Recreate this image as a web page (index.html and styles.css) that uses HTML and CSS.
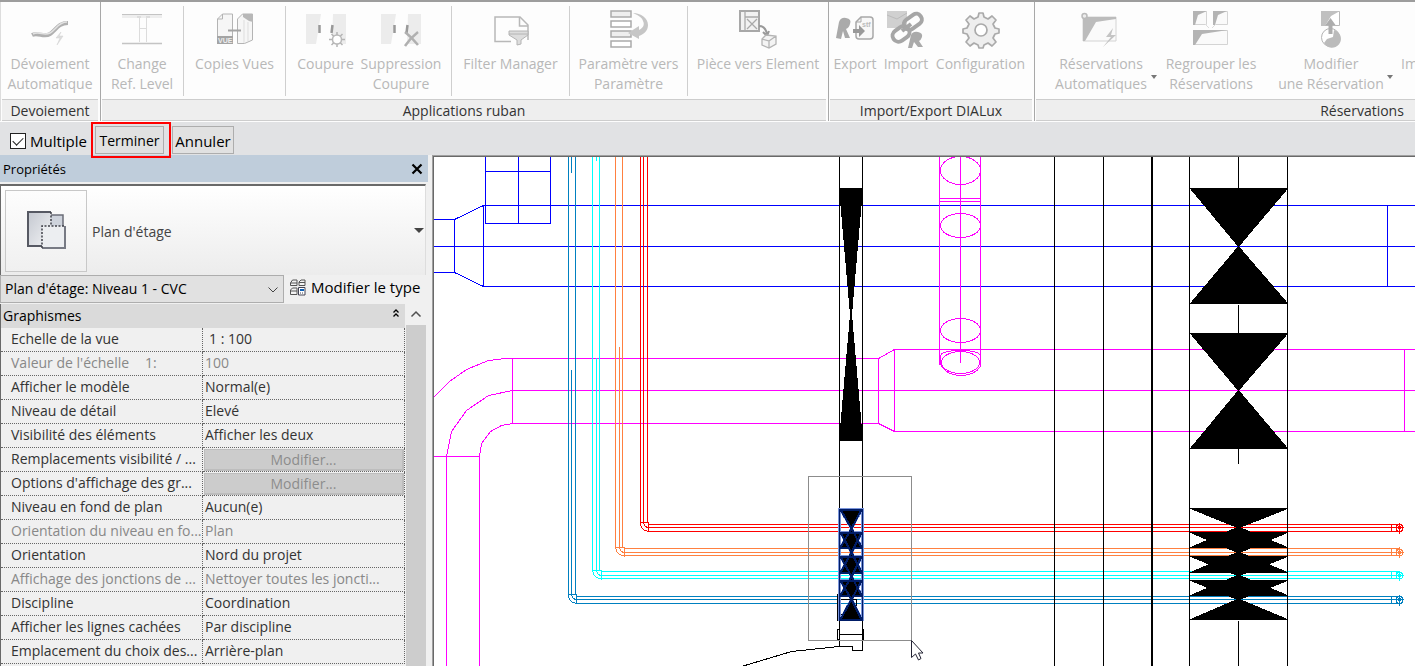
FILE: index.html
```html
<!DOCTYPE html>
<html lang="fr">
<head>
<meta charset="utf-8">
<title>Plan d'étage: Niveau 1 - CVC</title>
<link rel="stylesheet" href="styles.css">
</head>
<body>
<header class="ribbon">
  <div class="active-tab"></div>
  <section class="panel panel-devoiement">
    <div class="tools">
      <button class="tool w-full" type="button">
        <svg class="icon" viewBox="0 0 40 40"><path d="M2 25C8 22 14 28 20 24S28 13 38 13" fill="none" stroke="#b0b0b0" stroke-width="4"/><path d="M3 24C9 21 14 26 20 23S28 12 37 12" fill="none" stroke="#e2e2e2" stroke-width="1.500"/><path d="M31 22l-5 6h4l-3 7 6-9h-4z" fill="#ddd" stroke="#d0d0d0" stroke-width=".5"/></svg>
        <span>Dévoiement<br>Automatique</span></button>
    </div>
    <h2 class="panel-title">Devoiement</h2>
  </section>
  <section class="panel panel-apps">
    <div class="tools">
      <button class="tool w-82" type="button">
        <svg class="icon" viewBox="0 0 40 40"><path d="M0 4h40v4H0zM0 32h40v3H0z" fill="#eee"/><path d="M0 4.500h40M0 33.500h40" stroke="#c4c4c4"/><path d="M17.500 8v24M24.500 8v24M17 18.500h8" stroke="#dcdcdc" fill="none"/><path d="M15 7h4M24 7h4" stroke="#ccc"/></svg>
        <span>Change<br>Ref. Level</span></button>
      <i class="rule"></i>
      <button class="tool w-101" type="button">
        <svg class="icon" viewBox="0 0 40 40"><path d="M2.500 33.500V9l5-5h10v29.500z" fill="#f6f6f6" stroke="#b4b4b4"/><path d="M7.500 4v5h-5" fill="none" stroke="#b4b4b4"/><path d="M2 26h16v8H2z" fill="#a4a4a4"/><text x="3" y="33" class="vue">VUE</text><path d="M22.500 33.500V9l5-5h10v26l-8 3.500z" fill="#f6f6f6" stroke="#b4b4b4"/><path d="M28 4h10v8l-4-1-6-4z" fill="#b8b8b8"/><path d="M29 10v23M33 12v19" stroke="#ddd"/><path d="M13 20.500h13" stroke="#a4a4a4" stroke-width="2"/></svg>
        <span>Copies Vues</span></button>
      <i class="rule"></i>
      <button class="tool w-79" type="button">
        <svg class="icon" viewBox="0 0 40 40"><path d="M0 4h15l-5 30H0zM27 4h13v30H26z" fill="#ececec"/><path d="M13.500 15v8M26.500 15l-1 8" stroke="#999" stroke-width="2.500"/><path d="M31 22v15M23 29.500h16M25.500 24l11 11M36.500 24l-11 11" stroke="#b4b4b4" stroke-width="1.500"/><circle cx="31" cy="29.500" r="4.500" fill="#fff" stroke="#b8b8b8" stroke-width="1.500"/></svg>
        <span>Coupure</span></button>
      <button class="tool w-86 shift" type="button">
        <svg class="icon" viewBox="0 0 40 40"><path d="M0 4h15l-5 30H0zM27 4h13v30H26z" fill="#ececec"/><path d="M13.500 15v8M26.500 15l-1 8" stroke="#999" stroke-width="2.500"/><path d="M24 22c5 4 9 8 13 13M37 22c-5 4-9 8-13 14" fill="none" stroke="#b0b0b0" stroke-width="2.500"/></svg>
        <span>Suppression<br>Coupure</span></button>
      <i class="rule"></i>
      <button class="tool w-117" type="button">
        <svg class="icon" viewBox="0 0 40 40"><path d="M20 31.500H4V7h25l8 8v15" fill="none" stroke="#b8b8b8" stroke-width="1.500"/><path d="M28.500 7v9H37" fill="none" stroke="#b8b8b8" stroke-width="1.500"/><path d="M18 21h19v4l-7 5v4l-4 1v-5l-8-5z" fill="#ddd" stroke="#b4b4b4"/><path d="M18 24h19" stroke="#b4b4b4"/></svg>
        <span>Filter Manager</span></button>
      <i class="rule"></i>
      <button class="tool w-117" type="button">
        <svg class="icon" viewBox="0 0 40 40"><g fill="#eee" stroke="#aaa" stroke-width="1.500"><path d="M2 1h20v6H2z"/><path d="M2 11h20v6H2z" fill="#fff"/><path d="M2 21h20v6H2z"/><path d="M2 31h20v6H2z" fill="#fff"/></g><path d="M24 3c8 0 15 5 15 12 0 6-4 9-9 11v3l-11-6 11-7v4c4-2 6-5 4-9-1-4-6-6-10-8z" fill="#c6c6c6"/></svg>
        <span>Paramètre vers<br>Paramètre</span></button>
      <i class="rule"></i>
      <button class="tool w-grow" type="button">
        <svg class="icon lead" viewBox="0 0 40 40"><path d="M2 1h19v20H2z" fill="#f2f2f2" stroke="#a8a8a8" stroke-width="2"/><path d="M7 1v20M7 7h14M9 9l10 10M19 9L9 19" fill="none" stroke="#aaa" stroke-width="1.300"/><path d="M21 16c5 0 7 3 8 8m-4-2l4 4 2-5" fill="none" stroke="#999" stroke-width="2"/><path d="M24 29l4-4 10 1v8l-7 4-7-3zM24 29l7 2v7M31 31l7-5" fill="#f4f4f4" stroke="#b4b4b4" stroke-width="1.300"/></svg>
        <span>Pièce vers Element</span></button>
    </div>
    <h2 class="panel-title">Applications ruban</h2>
  </section>
  <section class="panel panel-dialux">
    <div class="tools">
      <button class="tool w-52" type="button">
        <svg class="icon" viewBox="0 0 40 40"><path d="M1 28L4 12q2-5 7-4 6 1 4 6-1 4-4 5l4 9h-5L8 21 6 29z" fill="#aaa"/><path d="M26 7h9q3 0 3 3v16q0 3-3 3H24q-3 0-3-3V12z" fill="#f8f8f8" stroke="#a8a8a8" stroke-width="1.500"/><path d="M26 7v5h-5" fill="none" stroke="#a8a8a8"/><text x="27" y="17" class="stf">stf</text><path d="M18 19h6v-4l6 6-6 6v-4h-6z" fill="#999"/></svg>
        <span>Export</span></button>
      <button class="tool w-50" type="button">
        <svg class="icon" viewBox="0 0 40 40"><path d="M1 1h20v17H1z" fill="#d0d0d0"/><path d="M1 5l10 4L21 3" fill="none" stroke="#bbb"/><rect x="17" y="6" width="19" height="11" rx="5" transform="rotate(-35 27 11)" fill="none" stroke="#a6a6a6" stroke-width="4"/><rect x="6" y="18" width="18" height="12" rx="6" transform="rotate(-35 15 24)" fill="none" stroke="#a6a6a6" stroke-width="4"/><path d="M16 21l9-7" stroke="#a6a6a6" stroke-width="4"/><path d="M22 38l3-13q2-4 7-3 5 1 4 5-1 3-3 4l4 6h-5l-4-5-2 6z" fill="#aaa"/></svg>
        <span>Import</span></button>
      <button class="tool w-99" type="button">
        <svg class="icon" viewBox="0 0 40 40"><path d="M18 3h4l1 4 4 2 4-3 4 4-3 4 2 4 4 1v4l-4 1-2 4 3 4-4 4-4-3-4 2-1 3h-4l-1-3-4-2-4 3-4-4 3-4-2-4-4-1v-4l4-1 2-4-3-4 4-4 4 3 4-2z" fill="#eee" stroke="#aaa" stroke-width="1.700" stroke-linejoin="round"/><circle cx="20" cy="20" r="6" fill="#fff" stroke="#aaa" stroke-width="1.700"/></svg>
        <span>Configuration</span></button>
    </div>
    <h2 class="panel-title">Import/Export DIALux</h2>
  </section>
  <section class="panel panel-reservations">
    <div class="tools">
      <button class="tool w-112" type="button">
        <svg class="icon" viewBox="0 0 40 40"><path d="M2 7h33v24H2z" fill="#fafafa" stroke="#d4d4d4"/><path d="M2 31V7h33v2l-20 3L4 31z" fill="#bcbcbc"/><circle cx="3.500" cy="6" r="2.500" fill="#eee" stroke="#bbb" stroke-width="1.500"/><path d="M32 18l-7 9h5l-8 10 13-12h-5z" fill="#c4c4c4"/></svg>
        <span>Réservations<br>Automatiques</span><i class="drop"></i></button>
      <button class="tool w-108" type="button">
        <svg class="icon" viewBox="0 0 40 40"><path d="M2.500 1.500h13v13h-13zM22.500 1.500h14v13h-14zM2.500 20.500h34v14h-34z" fill="#fafafa" stroke="#d4d4d4"/><path d="M2 15V1h14L7 5 4 15zM22 15V1h14l-9 4-3 10zM2 35V20h35l-26 4-7 11z" fill="#b4b4b4"/><path d="M14 14l4 4M25 14l-4 4" stroke="#ddd"/></svg>
        <span>Regrouper les<br>Réservations</span></button>
      <button class="tool w-132" type="button">
        <svg class="icon" viewBox="0 0 40 40"><path d="M10.500 1.500h18v14h-18z" fill="#fff" stroke="#b8b8b8"/><path d="M10 16V1h19l-9 5-6 10z" fill="#c0c0c0"/><circle cx="19.500" cy="27.500" r="9" fill="#fff" stroke="#b4b4b4"/><path d="M13 33a9 9 0 1 0 10-13l-1 7-6 2z" fill="#bbb"/><path d="M19.500 8l5 7h-3v9h-4v-9h-3z" fill="#adadad"/></svg>
        <span>Modifier<br>une Réservation</span><i class="drop"></i></button>
      <button class="tool cut" type="button"><svg class="icon" viewBox="0 0 40 40"></svg><span>Im</span></button>
    </div>
    <h2 class="panel-title">Réservations</h2>
  </section>
</header>

<form class="options">
  <label class="check"><input type="checkbox" checked><span>Multiple</span></label>
  <span class="marked"><button class="btn btn-finish" type="button">Terminer</button></span>
  <button class="btn btn-cancel" type="button">Annuler</button>
</form>

<main class="workspace">
  <aside class="palette">
    <div class="palette-head">
      <h1>Propriétés</h1>
      <button class="close" type="button" aria-label="Fermer"><svg width="12" height="12" viewBox="0 0 12 12"><path d="M1.500 1.500l9 9M10.500 1.500l-9 9" stroke="#000" stroke-width="2.200"/></svg></button>
    </div>
    <button class="type-selector" type="button">
      <span class="thumb"><svg width="40" height="42" viewBox="0 0 40 42">
        <defs><linearGradient id="g" x1="0" y1="0" x2="1" y2="1"><stop offset="0" stop-color="#c4c8d0"/><stop offset="1" stop-color="#f2f3f5"/></linearGradient></defs>
        <path d="M24 5h13v12H24z" fill="#ced3dc" stroke="#6b6e78" stroke-width="1.500"/><path d="M2 2h23v34H2z" fill="url(#g)"/><path d="M25 2H2v34h14" fill="none" stroke="#565963" stroke-width="2"/><path d="M16 16h23v22H16z" fill="#eceef1"/><path d="M39 16v22H16" fill="none" stroke="#777a84" stroke-width="2"/><path d="M25 2v14M16 38V16h23" fill="none" stroke="#40424a" stroke-width="1.500" stroke-dasharray="2 1.500"/></svg></span>
      <span class="type-name">Plan d'étage</span>
      <i class="drop-lg"></i>
    </button>
    <div class="instance">
      <div class="select-wrap">
        <select aria-label="Vue"><option>Plan d'étage: Niveau 1 - CVC</option></select>
        <svg class="chevron" width="10" height="6" viewBox="0 0 10 6"><path d="M.5 .5L5 5 9.500 .5" fill="none" stroke="#444"/></svg>
      </div>
      <button class="edit-type" type="button">
        <svg width="16" height="17" viewBox="0 0 16 17"><path d="M.5 6.500V4l2-3h4.500v5.500zM9 6.500V3l2-2h4v5.500zM.5 15.500V11l2-2H7v6.500zM.5 4H7M9 3.500h6M.5 12H7" fill="#f4f4f4" stroke="#555"/><path d="M8.500 8.500h6.500v7.500H8.500z" fill="#fff" stroke="#445"/><path d="M10 10h4v2h-4z" fill="#0b5fb5"/><path d="M10 14h1M12 14h1" stroke="#445"/></svg>
        Modifier le type</button>
    </div>
    <div class="grid">
      <div class="grid-body">
        <button class="group" type="button">Graphismes<svg width="6" height="10" viewBox="0 0 6 10"><path d="M.5 3.500L3 1l2.500 2.500M.5 7.500L3 5l2.500 2.500" fill="none" stroke="#000" stroke-width="1.300"/></svg></button>
        <table>
          <tr><th scope="row">Echelle de la vue</th><td class="indent">1 : 100</td></tr>
          <tr class="off"><th scope="row"><span class="scale">Valeur de l'échelle</span>1:</th><td>100</td></tr>
          <tr><th scope="row">Afficher le modèle</th><td>Normal(e)</td></tr>
          <tr><th scope="row">Niveau de détail</th><td>Elevé</td></tr>
          <tr><th scope="row">Visibilité des éléments</th><td>Afficher les deux</td></tr>
          <tr><th scope="row">Remplacements visibilité / ...</th><td class="cell-btn"><button type="button" disabled>Modifier...</button></td></tr>
          <tr><th scope="row">Options d'affichage des gr...</th><td class="cell-btn"><button type="button" disabled>Modifier...</button></td></tr>
          <tr><th scope="row">Niveau en fond de plan</th><td>Aucun(e)</td></tr>
          <tr class="off"><th scope="row">Orientation du niveau en fo...</th><td>Plan</td></tr>
          <tr><th scope="row">Orientation</th><td>Nord du projet</td></tr>
          <tr class="off"><th scope="row">Affichage des jonctions de ...</th><td>Nettoyer toutes les joncti...</td></tr>
          <tr><th scope="row">Discipline</th><td>Coordination</td></tr>
          <tr><th scope="row">Afficher les lignes cachées</th><td>Par discipline</td></tr>
          <tr><th scope="row">Emplacement du choix des...</th><td>Arrière-plan</td></tr>
        </table>
      </div>
      <div class="scroll"><svg width="20" height="20" viewBox="0 0 20 20"><path d="M5.500 12.500L10 8l4.500 4.500" fill="none" stroke="#505050" stroke-width="1.500"/></svg><div class="scroll-thumb"></div></div>
    </div>
  </aside>

  <section class="view">
    <svg class="drawing" aria-label="Vue en plan">
      <g transform="translate(-433.5 -156.5)" fill="none" stroke-width="1">
        <!-- ducts -->
        <g stroke="#00f">
          <path d="M485 150V223H550V150M518 150V223M485 171H550"/>
          <path d="M430 219H454L483 205H3000M430 246H3000M430 272H454L483 286H3000M454 219V272M483 205V286M1387 205V286"/>
        </g>
        <g stroke="#f0f">
          <path d="M433 397L449 381L466 369L488 360L505 358H878L894 349H3000"/>
          <path d="M446 2000V456L451 431L466 410L488 395L512 390H3000"/>
          <path d="M479 2000V456L481 443L490 431L501 425L512 423H878L894 431H3000"/>
          <path d="M430 456H479M512 358V423M878 358V423M894 349V431M1404 349V431"/>
          <path d="M939 150V364M980 150V366M960 150V362M939 198H980M939 201H980"/>
          <ellipse cx="960" cy="170" rx="20" ry="14"/><ellipse cx="960" cy="225" rx="20" ry="12"/><ellipse cx="960" cy="330" rx="20" ry="12"/>
          <ellipse cx="960" cy="362" rx="19" ry="11"/><path d="M940 364V355Q942 350 960 350T980 355V366Q974 375 960 375T940 364"/>
        </g>
        <!-- pipes -->
        <g stroke="#f00">
          <path d="M640 150V522M643 150V522M647 150V522M639 522H648V531M640 522Q640 530 648 531M643 522Q644 527 648 527M648 524H1399M648 527H1396M648 531H1399"/>
          <path d="M1391 524V531M1396 524V531M1399 522V533M1394 527H1403M1397 525L1401 529M1401 525L1397 529"/><circle cx="1399" cy="527.500" r="3.500"/>
        </g>
        <g stroke="#ff8040">
          <path d="M615 150V547M619 346V547M622 150V547M615 547H624V556M615 547Q616 555 624 555M619 547Q620 552 624 552M624 548H1399M624 552H1396M624 555H1399"/>
          <path d="M1391 548V555M1396 548V555M1399 546V557M1394 552H1403M1397 550L1401 554M1401 550L1397 554"/><circle cx="1399" cy="552" r="3.500"/>
        </g>
        <g stroke="#0ff">
          <path d="M592 150V570M596 150V160M596 357V570M599 150V570M592 570H601V579M592 570Q593 578 601 578M596 570Q597 575 601 575M601 571H1399M601 575H1396M601 578H1399"/>
          <path d="M1391 571V578M1396 571V578M1399 570V580M1394 575H1403M1397 573L1401 577M1401 573L1397 577"/><circle cx="1399" cy="575" r="3.500"/>
        </g>
        <g stroke="#0080c0">
          <path d="M568 150V594M571 150V172M571 369V594M575 150V594M567 594H576V603M568 594Q568 602 576 603M571 594Q572 599 576 599M576 596H1399M576 599H1396M576 603H1399"/>
          <path d="M1391 596V603M1396 596V603M1399 594V605M1394 599H1403M1397 597L1401 601M1401 597L1397 601"/><circle cx="1399" cy="599.500" r="3.500"/>
        </g>
        <!-- walls -->
        <g stroke="#000">
          <path d="M839 150V646M862 150V650M1054 150V2000M1103 150V2000M1189 150V2000M1287 150V2000"/>
          <path d="M1151.500 150V2000" stroke-width="2"/>
          <path d="M1238 150V188M1238 304V333M1238 448V463M1238 620V2000"/>
          <path d="M741 666L791 651L829 647L839 646H852V650H862M839 629H837V639H839M862 629H863V639H862M839 634H863"/>
          <path d="M839 594H837V620H839M839 599H856V607M837 614H842"/>
        </g>
        <!-- wall openings -->
        <g fill="#000" stroke="#000">
          <path d="M839 188H862L851 314L862 440H839L850 314Z"/>
          <path d="M1190 188H1287L1238 246L1287 303H1190L1238 246Z"/>
          <path d="M1190 333H1287L1238 390L1287 448H1190L1238 390Z"/>
          <path d="M1190 508H1287L1239 527L1287 547H1190L1237 527Z"/>
          <path d="M1190 532H1287L1239 552L1287 572H1190L1237 552Z"/>
          <path d="M1190 556H1287L1239 575L1287 595H1190L1237 575Z"/>
          <path d="M1190 580H1287L1239 599L1287 619H1190L1237 599Z"/>
        </g>
        <!-- selected openings -->
        <path d="M839 509H862V619H839Z" stroke="#7b95da" stroke-width="3"/>
        <g stroke="#7b95da" stroke-width="3">
          <path d="M840 509H861L851 528L861 547H840L851 528ZM840 532H861L851 552L861 572H840L851 552ZM840 556H861L851 576L861 595H840L851 576ZM840 580H861L851 599L861 619H840L851 599Z"/>
        </g>
        <g fill="#000" stroke="#001c66" stroke-width="2">
          <path d="M840 509H861L851 528L861 547H840L851 528Z"/>
          <path d="M840 532H861L851 552L861 572H840L851 552Z"/>
          <path d="M840 556H861L851 576L861 595H840L851 576Z"/>
          <path d="M840 580H861L851 599L861 619H840L851 599Z"/>
          <path d="M851 528L840 547M851 528L861 547M851 552L840 532M851 552L861 532M851 552L840 572M851 552L861 572M851 576L840 556M851 576L861 556M851 576L840 595M851 576L861 595M851 599L840 580M851 599L861 580"/>
        </g>
        <path d="M839 509V619M862 509V619" stroke="#001c66"/>
        <path d="M808 476H911V640H808Z" stroke="#8c8c8c"/>
        <path class="pointer" d="M911 640V657L915 653.500L918 659.500L920.500 658L918 652.500H922.500Z" fill="#fff" stroke="#223"/>
      </g>
    </svg>
  </section>
</main>
</body>
</html>
```
FILE: styles.css
```css
* { box-sizing: border-box; }

body {
  margin: 0;
  height: 100vh;
  display: flex;
  flex-direction: column;
  overflow: hidden;
  background: #f0f0f0;
  color: #000;
  font: 14px/20px "Open Sans", "Noto Sans", sans-serif;
}

button, select, input { font: inherit; color: inherit; margin: 0; }
h1, h2 { margin: 0; font: inherit; }
svg { display: block; flex: none; }

/* Ribbon */
.ribbon {
  position: relative;
  display: flex;
  flex: none;
  height: 122px;
  overflow: hidden;
  border-top: 2px solid #9d9d9d;
  background: #fdfdfd;
}
.active-tab {
  position: absolute;
  top: -2px;
  left: 994px;
  width: 80px;
  height: 2px;
  background: #f8f8f8;
}
.panel {
  display: flex;
  flex: none;
  flex-direction: column;
  border-right: 1px solid #a8a8a8;
  margin-bottom: 1px;
}
.panel-devoiement { width: 101px; border-left: 1px solid #ddd; }
.panel-apps { width: 728px; }
.panel-dialux { width: 206px; }
.panel-reservations { width: 656px; }
.tools { display: flex; flex: 1; min-height: 0; }
.panel-reservations .tools { padding-left: 10px; }
.panel-title {
  height: 22px;
  margin: 0 2px 0 1px;
  border: 1px solid #cdcdcd;
  border-width: 1px 0;
  background: #eee;
  color: #333;
  line-height: 22px;
  text-align: center;
}
.tool {
  position: relative;
  display: flex;
  flex: none;
  flex-direction: column;
  align-items: center;
  padding: 8px 0 0;
  border: 0;
  background: none;
  color: #b8b8b8;
  text-align: center;
  white-space: nowrap;
}
.icon { width: 40px; height: 40px; margin-bottom: 4px; }
.rule { flex: none; width: 1px; height: 90px; margin-top: 4px; background: #cfcfcf; }
.w-full { width: 98px; }
.w-82 { width: 82px; }
.w-101 { width: 101px; }
.w-79 { width: 79px; }
.w-86 { width: 86px; }
.shift { padding-right: 14px; }
.w-117 { width: 117px; }
.w-grow { flex: 1; }
.lead { margin-right: 0; }
.w-52 { width: 52px; }
.w-50 { width: 50px; }
.w-99 { width: 99px; }
.w-112 { width: 112px; }
.w-108 { width: 108px; }
.w-132 { width: 132px; }
.cut { padding-left: 4px; align-items: flex-start; }
.drop {
  position: absolute;
  right: 0;
  bottom: 20px;
  border: 3px solid transparent;
  border-top: 4px solid #777;
  border-bottom: 0;
}
.w-132 .drop { right: 4px; }
.vue { font: bold 7px "Liberation Sans", sans-serif; fill: #eee; }
.stf { font: bold 7px "Liberation Sans", sans-serif; fill: #bbb; }

/* Options bar */
.options {
  display: flex;
  flex: none;
  align-items: flex-start;
  gap: 8px;
  height: 33px;
  padding: 4px 0 0 10px;
  background: #e1e2e4;
}
.check {
  display: flex;
  align-items: center;
  gap: 4px;
  width: 77px;
  height: 30px;
  font-size: 15px;
  white-space: nowrap;
}
.check input {
  appearance: none;
  flex: none;
  width: 16px;
  height: 16px;
  border: 1px solid #222;
  background: #fff;
  display: grid;
  place-items: center;
}
.check input:checked::after {
  content: "";
  width: 9px;
  height: 5px;
  border: solid #222;
  border-width: 0 0 1px 1px;
  transform: translateY(-1px) rotate(-45deg);
}
.marked { position: relative; }
.marked::after {
  content: "";
  position: absolute;
  inset: -4px -7px -4px -4px;
  border: 2px solid #f00;
  pointer-events: none;
  z-index: 2;
}
.btn {
  display: block;
  height: 28px;
  padding: 2px 0 0;
  border: 1px solid #adadad;
  background: #e1e1e1;
  text-align: center;
}
.btn-finish { width: 69px; }
.btn-cancel { width: 62px; font-size: 15px; }

/* Workspace */
.workspace { display: flex; flex: 1; min-height: 0; }
.palette { display: flex; flex: none; flex-direction: column; width: 428px; }
.palette-head {
  display: flex;
  flex: none;
  align-items: center;
  justify-content: space-between;
  height: 27px;
  padding: 0 5px 0 3px;
  background: #bfcddb;
}
.palette-head h1 { font-size: 13px; }
.close { display: flex; padding: 0; border: 0; background: none; }
.type-selector {
  display: flex;
  flex: none;
  align-items: center;
  height: 91px;
  margin: 2px 2px 0 0;
  padding: 0 1px 0 4px;
  border: solid #696969;
  border-width: 2px 1px 0 1px;
  border-right-color: #ddd;
  background: linear-gradient(#fff, #ececec);
  color: #444;
}
.thumb {
  display: grid;
  place-items: center;
  width: 82px;
  height: 82px;
  border: 1px solid #c8c8c8;
  background: linear-gradient(#fdfdfd, #f0f0f0);
}
.type-name { padding: 2px 0 0 5px; }
.drop-lg {
  margin-left: auto;
  border: 5px solid transparent;
  border-top-color: #444;
  border-bottom: 0;
}
.instance { display: flex; flex: none; height: 29px; align-items: flex-start; }
.select-wrap { position: relative; width: 284px; height: 28px; }
.select-wrap select {
  appearance: none;
  width: 100%;
  height: 100%;
  padding: 0 20px 0 4px;
  border: 1px solid #adadad;
  border-radius: 0;
  background: #e1e1e1;
}
.chevron { position: absolute; right: 6px; top: 12px; pointer-events: none; }
.edit-type {
  display: flex;
  align-items: center;
  gap: 5px;
  height: 24px;
  padding: 0 0 0 6px;
  border: 0;
  background: none;
  font-size: 15px;
  white-space: nowrap;
}
.grid { display: flex; flex: 1; min-height: 0; width: 426px; overflow: hidden; border-left: 1px solid #696969; }
.grid-body { flex: 1; min-width: 0; }
.group {
  display: flex;
  align-items: center;
  justify-content: space-between;
  width: 100%;
  height: 24px;
  padding: 0 6px 0 2px;
  border: 0;
  background: #dadada;
}
.group svg { margin-bottom: 4px; }
table { width: 100%; border-collapse: separate; border-spacing: 0; table-layout: fixed; }
th, td {
  height: 24px;
  padding: 0 0 2px 2px;
  border: dotted #666;
  border-width: 0 1px 1px 0;
  color: #333;
  font-weight: normal;
  text-align: left;
  white-space: nowrap;
  overflow: hidden;
}
th { padding-left: 10px; }
.off th, .off td { color: #888; }
td.indent { padding-left: 6px; }
.scale { margin-right: 16px; }
td.cell-btn { padding: 0 0 0 1px; }
.cell-btn button {
  display: block;
  width: 100%;
  height: 22px;
  padding: 1px 0 0;
  border: solid #bdbdbd;
  border-width: 1px 2px 2px 1px;
  background: #ccc;
  color: #8c8c8c;
  line-height: 18px;
}
.scroll { display: flex; flex-direction: column; width: 20px; margin-left: 1px; }
.scroll-thumb { flex: 1; background: #cdcdcd; margin-top: 1px; }
.view {
  flex: 1;
  min-width: 0;
  margin: 1px 0 0 5px;
  border: solid #696969;
  border-width: 1px 0 0 1px;
  outline: 1px solid #a0a0a0;
  background: #fff;
  overflow: hidden;
}
.drawing { width: 100%; height: 100%; shape-rendering: crispEdges; }
.pointer { shape-rendering: auto; }
```
